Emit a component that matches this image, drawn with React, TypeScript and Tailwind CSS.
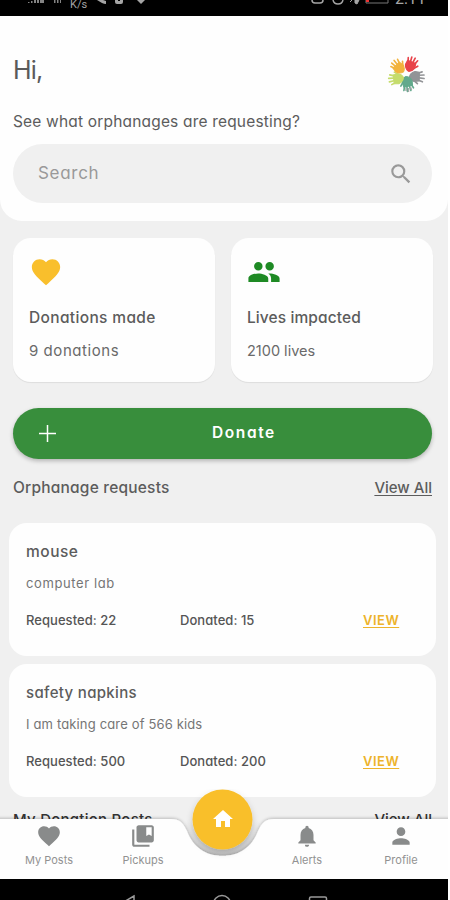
import React from "react";
import { MdFavorite, MdPeople, MdSearch, MdHome, MdNotifications, MdPerson, MdCollectionsBookmark } from "react-icons/md";

type RequestItem = {
  title: string;
  note: string;
  requested: number;
  donated: number;
  titleClass: string;
  noteClass: string;
};

const requests: RequestItem[] = [
  { title: "mouse", note: "computer lab", requested: 22, donated: 15, titleClass: "text-[15.5px] tracking-[0.5px]", noteClass: "tracking-[0.6px]" },
  { title: "safety napkins", note: "I am taking care of 566 kids", requested: 500, donated: 200, titleClass: "text-[15px] tracking-[0.33px]", noteClass: "tracking-[0.15px]" },
];

function StatusBar() {
  return (
    <header className="h-4 w-full shrink-0 overflow-hidden bg-black">
      <svg width="449" height="16" viewBox="0 0 449 16" fill="#a5a5a5">
        <path d="M28 2h1.5v1H28zM31 1h1.5v2H31zM34 0h2v3h-2zM37 0h2v3h-2zM40 0h4v3h-4z" opacity=".8" />
        <path d="M54 0h1.5v3H54zM57 0h1.5v3H57zM60 0h1v3h-1z" opacity=".8" />
        <text x="70" y="7.5" fontSize="11" fontFamily="Roboto, sans-serif">K/s</text>
        <path d="M97 0l5 3q2 1 4 1V1l-3-1z" />
        <path d="M115 0h8v2q0 2-2 2h-4q-2 0-2-2z" />
        <path d="M118 0h2v1h-2z" fill="#000" />
        <path d="M137 0h8l-4 4z" />
        <path d="M312 0q0 3 3 3h5q3 0 3-3M333 0q1 4 5 4t5-4" fill="none" stroke="#a5a5a5" strokeWidth="1.5" />
        <path d="M350 2l2-2M355 3V0l4 0-2 4z" stroke="#a5a5a5" />
        <path d="M366 0v3h22V0" fill="none" stroke="#777" />
        <path d="M366 0h3v2h-3z" fill="#e33" />
        <text x="395" y="3.5" fontSize="16" fontFamily="Roboto, sans-serif">2:11</text>
      </svg>
    </header>
  );
}

function Hand({ color, x, y, angle }: { color: string; x: number; y: number; angle: number }) {
  return (
    <g transform={`translate(${x} ${y}) rotate(${angle}) scale(1.1)`} stroke={color} fill={color} strokeLinecap="round">
      <path d="M-4-3L4-3L4.600 1.500Q3.500 5 .5 6Q-3.500 5-4.500 1Z" strokeWidth="1" strokeLinejoin="round" />
      <path d="M-3.500-3L-4.400-5.400M-1.200-3L-1.600-7.200M1.200-3L1.600-7.400M3.500-3L4.600-6M4 1.500L6.500-1.500" strokeWidth="1.500" fill="none" />
    </g>
  );
}

function HandsLogo() {
  return (
    <svg width="40" height="40" viewBox="-20 -20 40 40">
      <Hand color="#e8434a" x={4.5} y={-9} angle={22} />
      <Hand color="#929497" x={10} y={2.5} angle={92} />
      <Hand color="#62a98c" x={1.5} y={9} angle={168} />
      <path d="M0 14v3M2.500 14v4M4.500 13l1 3" stroke="#a3a9a8" strokeWidth="1.400" />
      <Hand color="#c5dc6c" x={-9} y={5} angle={262} />
      <Hand color="#f2b33d" x={-7.5} y={-6.5} angle={316} />
    </svg>
  );
}

function StatCard({ icon, title, value, titleClass, valueClass }: { icon: React.ReactNode; title: string; value: string; titleClass: string; valueClass: string }) {
  return (
    <article className="flex h-[144px] w-[202px] flex-col rounded-[18px] bg-[#fefefe] pl-4 pt-[17px] shadow-[0_1px_1px_rgba(0,0,0,0.08)]">
      <div className="h-[34px]">{icon}</div>
      <h2 className={`mt-[19px] whitespace-nowrap text-[15.5px] font-medium leading-5 text-[#5c5c5c] ${titleClass}`}>{title}</h2>
      <p className={`mt-[13px] whitespace-nowrap leading-5 text-[#6a6a6a] ${valueClass}`}>{value}</p>
    </article>
  );
}

function RequestCard({ item }: { item: RequestItem }) {
  return (
    <article className="h-[133px] rounded-[18px] bg-[#fefefe] px-[17px] pt-[19px]">
      <h3 className={`font-medium leading-5 text-[#5c5c5c] ${item.titleClass}`}>{item.title}</h3>
      <p className={`mt-[11px] text-[13px] leading-5 text-[#757575] ${item.noteClass}`}>{item.note}</p>
      <div className="mt-[17px] flex text-[13px] font-medium leading-5 text-[#555]">
        <span className="w-[154px] tracking-[0.05px]">Requested: {item.requested}</span>
        <span className="w-[183px] tracking-[0.05px]">Donated: {item.donated}</span>
        <a className="font-semibold tracking-[0.5px] text-[#edb32b] underline decoration-1 underline-offset-2">VIEW</a>
      </div>
    </article>
  );
}

function NavItem({ icon, label, className }: { icon: React.ReactNode; label: string; className: string }) {
  return (
    <div className={`flex flex-col items-center ${className}`}>
      <div className="h-[29px]">{icon}</div>
      <span className="whitespace-nowrap text-[11px] leading-4 text-[#929292]">{label}</span>
    </div>
  );
}

function BottomNav() {
  return (
    <nav className="absolute bottom-[21px] left-0 h-[90px] w-full">
      <svg className="absolute left-0 top-0" width="449" height="90" viewBox="0 0 449 90">
        <defs>
          <filter id="edge" x="-5%" y="-30%" width="110%" height="160%">
            <feDropShadow dx="0" dy="-1" stdDeviation="1.5" floodColor="#000" floodOpacity=".22" />
          </filter>
          <filter id="lift" x="-30%" y="-30%" width="160%" height="170%">
            <feDropShadow dx="0" dy="3" stdDeviation="3" floodColor="#000" floodOpacity=".2" />
          </filter>
          <linearGradient id="notch" x1="0" y1="0" x2="0" y2="1">
            <stop offset="0" stopColor="#ccc" stopOpacity="0" />
            <stop offset="1" stopColor="#ccc" />
          </linearGradient>
        </defs>
        <path d="M185 32H260V66H185Z" fill="url(#notch)" />
        <path d="M-5 30H171C180 30 183 34 187 42C193 58 206 67 222.500 67S252 58 258 42C262 34 265 30 274 30H455V100H-5Z" fill="#fefefe" filter="url(#edge)" />
        <circle cx="222.500" cy="30.500" r="30" fill="#f9bf2c" filter="url(#lift)" />
      </svg>
      <div className="relative flex h-full pt-[34px]">
        <NavItem className="ml-[9px] w-20" icon={<MdFavorite size={26} color="#898b8b" />} label="My Posts" />
        <NavItem className="ml-[14px] w-20" icon={<MdCollectionsBookmark size={26} color="#898b8b" />} label="Pickups" />
        <MdHome className="-mt-[16px] ml-[28px] mr-[32px] shrink-0" size={24} color="#fff" />
        <NavItem className="w-20" icon={<MdNotifications size={26} color="#898b8b" />} label="Alerts" />
        <NavItem className="ml-[14px] w-20" icon={<MdPerson size={26} color="#898b8b" />} label="Profile" />
      </div>
    </nav>
  );
}

export default function App() {
  return (
    <div className="h-[900px] w-[450px] overflow-hidden bg-white font-['Inter','Liberation_Sans',sans-serif] [font-feature-settings:'cv11']">
      <div className="relative flex h-full w-[448px] flex-col overflow-hidden bg-[#f0f0f0]">
        <StatusBar />
        <section className="h-[205px] shrink-0 rounded-b-[22px] bg-[#fefefe] pl-[13px] pr-4">
          <div className="flex h-[80px] items-start justify-between pt-[38px]">
            <h1 className="text-[25px] leading-8 tracking-[-0.8px] text-[#5a5a5a]">Hi,</h1>
            <div className="mr-[6px]"><HandsLogo /></div>
          </div>
          <p className="mt-4 whitespace-nowrap text-[15.5px] leading-5 tracking-[0.18px] text-[#5c5c5c]">See what orphanages are requesting?</p>
          <label className="mt-3 flex h-[59px] w-[419px] items-center justify-between rounded-full bg-[#f0f0f0] pl-[25px] pr-[18px]">
            <span className="pb-px text-[17px] leading-6 tracking-[0.7px] text-[#999]">Search</span>
            <MdSearch size={26} color="#999" />
          </label>
        </section>
        <main className="flex flex-col">
          <div className="mt-[17px] flex gap-[16px] pl-[13px]">
            <StatCard icon={<MdFavorite className="text-[#f9bf2c]" size={34} />} title="Donations made" value="9 donations" titleClass="tracking-[0.35px]" valueClass="text-[15px] tracking-[0.55px]" />
            <StatCard icon={<MdPeople className="text-[#1e8a24]" size={34} />} title="Lives impacted" value="2100 lives" titleClass="tracking-[0.1px]" valueClass="text-[14.5px]" />
          </div>
          <button className="ml-[13px] mt-[26px] flex h-[51px] w-[419px] items-center rounded-full bg-[#388e3c] text-white shadow-[0_2px_4px_rgba(0,0,0,0.25)]">
            <svg className="ml-[26px]" width="17" height="17" viewBox="0 0 17 17" stroke="#fff" strokeWidth="1.500"><path d="M8.500 0v17M0 8.500h17" /></svg>
            <span className="ml-[156px] pb-[2px] text-[15.5px] font-semibold leading-5 tracking-[1.6px]">Donate</span>
          </button>
          <div className="ml-[13px] mt-[19px] flex w-[419px] justify-between text-[15px] font-medium leading-5 text-[#5c5c5c]">
            <h2 className="text-[15.5px] tracking-[0.2px]">Orphanage requests</h2>
            <a className="underline decoration-1 underline-offset-2">View All</a>
          </div>
          <div className="ml-[9px] mt-[25px] flex w-[427px] flex-col gap-2 self-start">
            {requests.map((item) => <RequestCard key={item.title} item={item} />)}
          </div>
          <div className="ml-[13px] mt-[13px] flex w-[419px] justify-between text-[15px] font-medium leading-5 text-[#333]">
            <h2 className="tracking-[0.25px]">My Donation Posts</h2>
            <a>View All</a>
          </div>
        </main>
        <BottomNav />
        <footer className="absolute bottom-0 left-0 h-[21px] w-full bg-black">
          <svg width="448" height="21" viewBox="0 0 448 21" fill="none" stroke="#999" strokeWidth="1.500">
            <path d="M134 17L122 24L134 31Z" />
            <circle cx="222" cy="25" r="8.500" />
            <rect x="309.500" y="18" width="17" height="17" rx="1.500" />
          </svg>
        </footer>
      </div>
    </div>
  );
}
